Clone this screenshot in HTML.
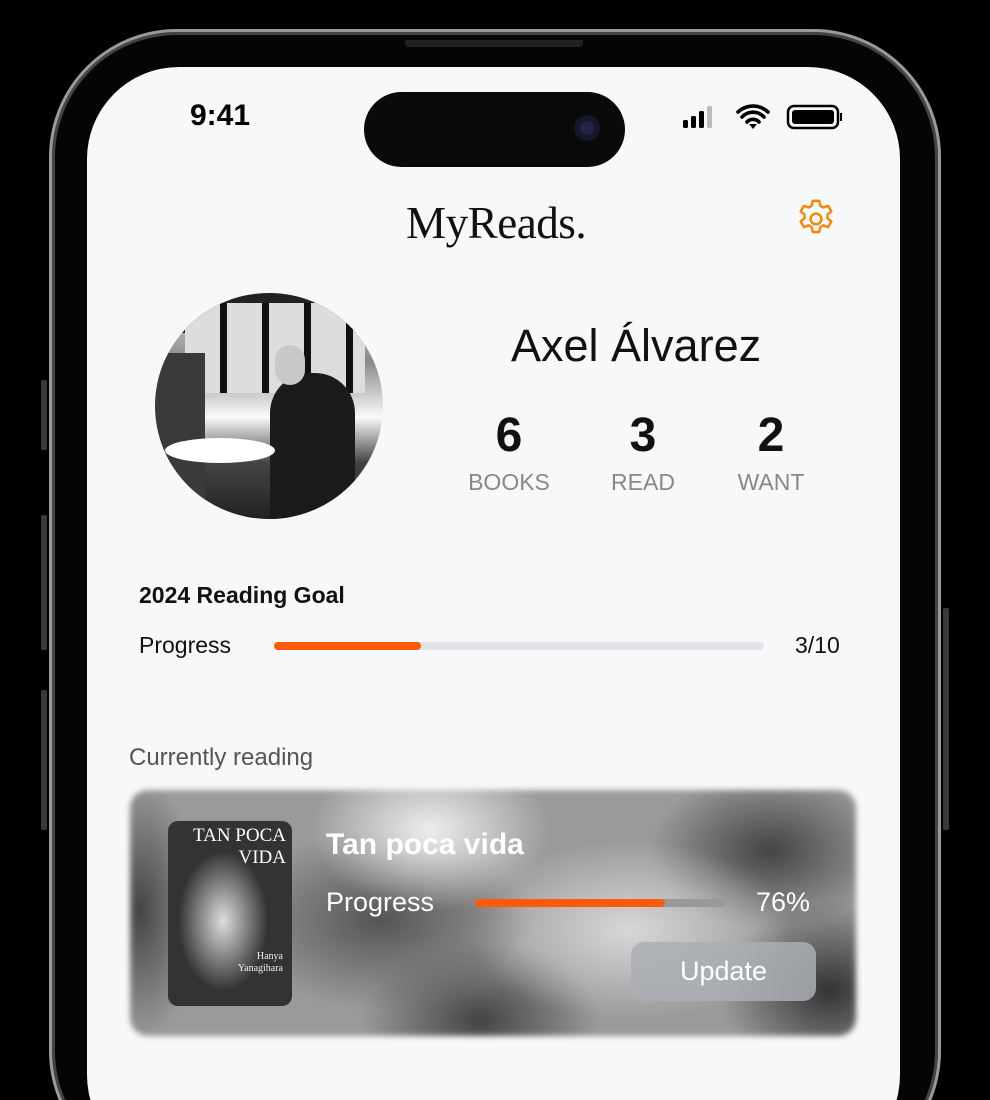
<!DOCTYPE html>
<html style="width:990px;height:1100px;overflow:hidden"><head><meta charset="utf-8"><style>
*{margin:0;padding:0;box-sizing:border-box}
body{width:990px;height:1100px;background:#000;position:relative;overflow:hidden;font-family:"Liberation Sans",sans-serif}
.clip{position:absolute;left:0;top:0;width:990px;height:1100px;overflow:hidden}
.abs{position:absolute}
.frame{left:49px;top:29px;width:892px;height:1150px;border-radius:128px;border:3px solid #9a9a9a;background:#050505;box-shadow:inset 0 0 0 3px #444}
.screen{left:87px;top:67px;width:813px;height:1100px;border-radius:92px;background:#f7f8fa}
.btn{background:#3a3a3a;width:6px;border-radius:2px}
</style></head><body><div class="clip">
<div class="abs btn" style="left:41px;top:380px;height:70px"></div>
<div class="abs btn" style="left:41px;top:515px;height:135px"></div>
<div class="abs btn" style="left:41px;top:690px;height:140px"></div>
<div class="abs btn" style="left:943px;top:608px;height:222px"></div>
<div class="abs frame"></div>
<div class="abs" style="left:405px;top:40px;width:178px;height:7px;background:#222;border-radius:0 0 4px 4px"></div>
<div class="abs screen"></div>
<div class="abs" style="left:190px;top:99px;font-size:30px;font-weight:bold;color:#000">9:41</div>
<div class="abs" style="left:364px;top:92px;width:261px;height:75px;border-radius:38px;background:#0a0a0a"></div>
<div class="abs" style="left:574px;top:115px;width:26px;height:26px;border-radius:50%;background:#161628"></div>
<div class="abs" style="left:580px;top:121px;width:14px;height:14px;border-radius:50%;background:#22224a"></div>
<svg class="abs" style="left:682px;top:104px" width="160" height="26">
<rect x="1" y="16" width="5" height="8" rx="1.5" fill="#000"/><rect x="9" y="12" width="5" height="12" rx="1.5" fill="#000"/><rect x="17" y="7" width="5" height="17" rx="1.5" fill="#000"/><rect x="25" y="2" width="5" height="22" rx="1.5" fill="#bbb"/>
<path d="M56 8a22 22 0 0 1 30 0M60 13a15 15 0 0 1 22 0M65 18a8 8 0 0 1 12 0" stroke="#000" stroke-width="3.6" fill="none" stroke-linecap="round"/><path d="M67 20l4 5 4-5z" fill="#000"/>
<rect x="106" y="2" width="50" height="22" rx="6" fill="none" stroke="#000" stroke-width="2.5"/><rect x="110" y="6" width="42" height="14" rx="3" fill="#000"/><rect x="158" y="9" width="2" height="8" fill="#000"/>
</svg>
<div class="abs" style="left:406px;top:196px;font-family:'Liberation Serif',serif;font-size:46px;color:#111;letter-spacing:-0.5px;transform:scaleX(0.98);transform-origin:left">MyReads.</div>
<svg class="abs" style="left:793px;top:196px" width="46" height="46" viewBox="0 0 24 24" fill="none" stroke="#f7860f" stroke-width="1.3"><path d="M10.3 2.5h3.4l.5 2.6 1.6.9 2.5-.9 1.7 2.9-2 1.7v1.9l2 1.7-1.7 2.9-2.5-.9-1.6.9-.5 2.6h-3.4l-.5-2.6-1.6-.9-2.5.9-1.7-2.9 2-1.7v-1.9l-2-1.7 1.7-2.9 2.5.9 1.6-.9z" stroke-linejoin="round"/><circle cx="12" cy="12" r="2.8"/></svg>
<div class="abs" style="left:155px;top:293px;width:228px;height:226px;border-radius:50%;overflow:hidden;background:linear-gradient(180deg,#e8e8e8 0%,#888 30%,#fafafa 55%,#444 75%,#222 100%)">
<div class="abs" style="left:0;top:0;width:228px;height:40px;background:#222"></div>
<div class="abs" style="left:30px;top:10px;width:180px;height:90px;background:repeating-linear-gradient(90deg,#ddd 0 35px,#111 35px 42px)"></div>
<div class="abs" style="left:0;top:60px;width:50px;height:166px;background:#3a3a3a"></div>
<div class="abs" style="left:115px;top:80px;width:85px;height:150px;border-radius:40px 40px 0 0;background:#1b1b1b"></div>
<div class="abs" style="left:120px;top:52px;width:30px;height:40px;border-radius:15px;background:#c8c8c8"></div>
<div class="abs" style="left:10px;top:145px;width:110px;height:25px;border-radius:50%;background:#fff"></div>
</div>
<div class="abs" style="left:511px;top:320px;font-size:45px;color:#111">Axel Álvarez</div>
<div class="abs" style="left:448px;top:408px;width:122px;text-align:center;font-size:48px;font-weight:bold;color:#111">6</div>
<div class="abs" style="left:582px;top:408px;width:122px;text-align:center;font-size:48px;font-weight:bold;color:#111">3</div>
<div class="abs" style="left:710px;top:408px;width:122px;text-align:center;font-size:48px;font-weight:bold;color:#111">2</div>
<div class="abs" style="left:448px;top:469px;width:122px;text-align:center;font-size:23px;color:#888">BOOKS</div>
<div class="abs" style="left:582px;top:469px;width:122px;text-align:center;font-size:23px;color:#888">READ</div>
<div class="abs" style="left:710px;top:469px;width:122px;text-align:center;font-size:23px;color:#888">WANT</div>
<div class="abs" style="left:139px;top:582px;font-size:23px;font-weight:bold;color:#111">2024 Reading Goal</div>
<div class="abs" style="left:139px;top:632px;font-size:23px;color:#111">Progress</div>
<div class="abs" style="left:274px;top:642px;width:490px;height:8px;border-radius:4px;background:#e2e3e6"></div>
<div class="abs" style="left:274px;top:642px;width:147px;height:8px;border-radius:4px;background:#ff5a0a"></div>
<div class="abs" style="left:795px;top:632px;font-size:23px;color:#111">3/10</div>
<div class="abs" style="left:129px;top:744px;font-size:24px;color:#555">Currently reading</div>
<div class="abs" style="left:130px;top:790px;width:726px;height:246px;border-radius:18px;overflow:hidden;filter:blur(3px);background:radial-gradient(ellipse 120px 80px at 300px 40px,#eee,transparent),radial-gradient(ellipse 150px 90px at 250px 130px,#555,transparent),radial-gradient(ellipse 160px 90px at 500px 140px,#d8d8d8,transparent),radial-gradient(ellipse 120px 80px at 640px 60px,#444,transparent),radial-gradient(ellipse 120px 80px at 350px 230px,#444,transparent),radial-gradient(ellipse 110px 90px at 700px 200px,#333,transparent),radial-gradient(ellipse 60px 130px at 10px 120px,#444,transparent),#9a9a9a"></div>
<div class="abs" style="left:168px;top:821px;width:124px;height:185px;border-radius:10px;overflow:hidden;background:radial-gradient(ellipse 45px 70px at 55px 100px,#ddd,#777 60%,#333)">
<div class="abs" style="left:8px;top:4px;font-family:'Liberation Serif',serif;color:#fff;font-size:19px;line-height:22px;width:110px;text-align:right">TAN POCA<br>VIDA</div>
<div class="abs" style="left:60px;top:130px;font-family:'Liberation Serif',serif;color:#eee;font-size:10px;line-height:12px;width:55px;text-align:right">Hanya<br>Yanagihara</div>
</div>
<div class="abs" style="left:326px;top:828px;font-size:30px;font-weight:bold;color:#fff">Tan poca vida</div>
<div class="abs" style="left:326px;top:887px;font-size:27px;color:#fff">Progress</div>
<div class="abs" style="left:475px;top:899px;width:250px;height:8px;border-radius:4px;background:#999"></div>
<div class="abs" style="left:475px;top:899px;width:190px;height:8px;border-radius:4px;background:#ff5a0a"></div>
<div class="abs" style="left:756px;top:887px;font-size:27px;color:#fff">76%</div>
<div class="abs" style="left:631px;top:942px;width:185px;height:59px;border-radius:13px;background:rgba(170,175,180,0.85);color:#fff;font-size:27px;text-align:center;line-height:59px">Update</div>
</div></body></html>
